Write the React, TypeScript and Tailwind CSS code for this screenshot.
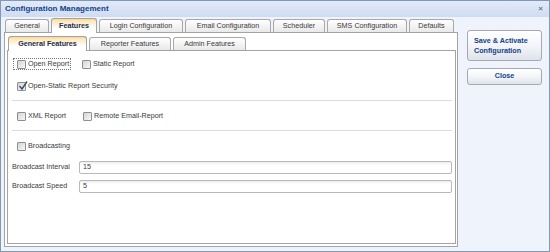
import React from "react";

function Tab({ label, w, active }: { label: string; w: number; active?: boolean }) {
  if (active) {
    return (
      <div
        style={{ width: w }}
        className="relative z-10 -mb-px h-[15px] shrink-0 rounded-t-[3px] border border-b-0 border-[#a3a3a3] bg-[linear-gradient(to_bottom,#fbd58e_0px,#fde7b8_2px,#ffffff_9px)] flex items-center justify-center font-bold text-[#1c2e4d]"
      >
        {label}
      </div>
    );
  }
  return (
    <div
      style={{ width: w }}
      className="h-[13px] shrink-0 rounded-t-[3px] border border-b-0 border-[#a8a8a8] bg-[linear-gradient(to_bottom,#ffffff,#e9e9e9)] flex items-center justify-center text-[#3a3a3a]"
    >
      {label}
    </div>
  );
}

function Box({ checked }: { checked?: boolean }) {
  return (
    <span className="relative inline-block w-[9px] h-[9px] shrink-0 rounded-[1px] border border-[#8e8f8f] bg-[linear-gradient(135deg,#d4d4d4,#f7f7f7)]">
      {checked && (
        <svg viewBox="0 0 10 10" className="absolute left-[0px] top-[-2px] w-[10px] h-[10px]">
          <path d="M1.5 5 L4 8 L9 0.5" fill="none" stroke="#3d4b6a" strokeWidth="1.4" />
        </svg>
      )}
    </span>
  );
}

function Check({ label, checked, focus, w }: { label: string; checked?: boolean; focus?: boolean; w?: number }) {
  return (
    <div style={w ? { width: w } : undefined} className="shrink-0 flex">
      <div
        className={
          "h-[12px] flex items-center gap-[2px] pl-[3px] pr-[1px] border " +
          (focus ? "border-dotted border-[#777]" : "border-transparent")
        }
      >
        <Box checked={checked} />
        <span className="whitespace-nowrap leading-none">{label}</span>
      </div>
    </div>
  );
}

function Field({ label, value }: { label: string; value: string }) {
  return (
    <div className="flex items-center h-[13px]">
      <span className="w-[67px] shrink-0 whitespace-nowrap">{label}</span>
      <div className="flex-1 h-[13px] rounded-[2px] border border-[#b9b9b9] bg-[linear-gradient(to_bottom,#ececec_0px,#ffffff_3px)] flex items-center pl-[3px]">
        {value}
      </div>
    </div>
  );
}

export default function App() {
  return (
    <div className="w-[550px] h-[252px] overflow-hidden border border-[#8298b8] bg-[#eef3fc] flex flex-col font-['Liberation_Sans',Arial,sans-serif] text-[7.2px] text-[#3a3a3a]">
      <div className="h-[16px] shrink-0 flex items-center justify-between pl-[4px] pr-[6px] bg-[linear-gradient(to_bottom,#e1eaf8,#cfdcf0)]">
        <span className="font-bold text-[8px] text-[#15428b]">Configuration Management</span>
        <span className="text-[8px] text-[#6a7a90] font-bold">×</span>
      </div>
      <div className="flex-1 flex pl-[3px]">
        <div className="w-[454px] flex flex-col pt-[1px] pb-[4px]">
          <div className="h-[14px] flex items-end pl-[1px] gap-[2px]">
            <Tab label="General" w={44} />
            <Tab label="Features" w={46} active />
            <Tab label="Login Configuration" w={84} />
            <Tab label="Email Configuration" w={86} />
            <Tab label="Scheduler" w={52} />
            <Tab label="SMS Configuration" w={80} />
            <Tab label="Defaults" w={45} />
          </div>
          <div className="flex-1 border border-[#a3a3a3] bg-white flex flex-col pl-[2px] pr-[1px] pb-[2px]">
            <div className="h-[17px] flex items-end pl-[1px] gap-[2px]">
              <Tab label="General Features" w={79} active />
              <Tab label="Reporter Features" w={82} />
              <Tab label="Admin Features" w={73} />
            </div>
            <div className="flex-1 border border-[#a3a3a3] bg-white flex flex-col pl-[4px] pr-[3px] pt-[7px]">
              <div className="flex ml-[1px]">
                <Check label="Open Report" focus w={65} />
                <Check label="Static Report" />
              </div>
              <div className="flex ml-[1px] mt-[10px]">
                <Check label="Open-Static Report Security" checked />
              </div>
              <div className="mt-[8px] h-px bg-[#d9dde3]" />
              <div className="flex ml-[1px] mt-[9px]">
                <Check label="XML Report" w={66} />
                <Check label="Remote Email-Report" />
              </div>
              <div className="mt-[8px] h-px bg-[#d9dde3]" />
              <div className="flex ml-[1px] mt-[9px]">
                <Check label="Broadcasting" />
              </div>
              <div className="mt-[9px]">
                <Field label="Broadcast Interval" value="15" />
              </div>
              <div className="mt-[6px]">
                <Field label="Broadcast Speed" value="5" />
              </div>
            </div>
          </div>
        </div>
        <div className="ml-[9px] w-[75px] flex flex-col pt-[13px] gap-[7px]">
          <div className="h-[31px] rounded-[3px] border border-[#a6a9b0] bg-[linear-gradient(to_bottom,#ffffff,#f3f5f9_50%,#dfe3ea)] flex items-center pl-[6px] font-bold text-[#15428b] leading-[10px]">
            <span>
              Save &amp; Activate
              <br />
              Configuration
            </span>
          </div>
          <div className="h-[17px] rounded-[3px] border border-[#a6a9b0] bg-[linear-gradient(to_bottom,#ffffff,#f3f5f9_50%,#dfe3ea)] flex items-center justify-center font-bold text-[#15428b]">
            Close
          </div>
        </div>
      </div>
    </div>
  );
}
